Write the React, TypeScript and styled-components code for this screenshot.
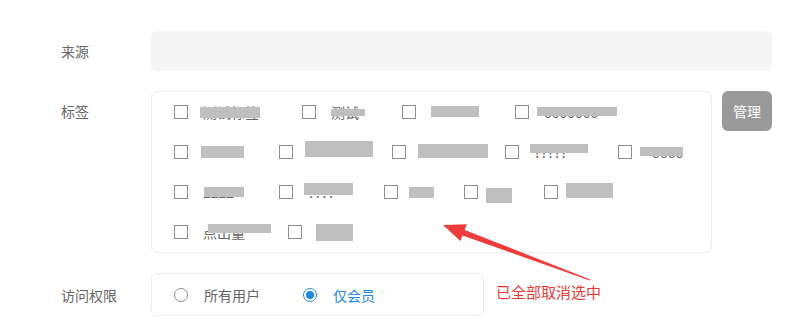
import React from 'react';
import styled, { createGlobalStyle } from 'styled-components';

const GlobalStyle = createGlobalStyle`
  body {
    margin: 0;
    background: #fff;
    font-family: "Noto Sans CJK SC", "Noto Sans", sans-serif;
  }
`;

const Page = styled.div`
  position: relative;
  width: 788px;
  height: 336px;
  padding: 31px 0 0 61px;
  box-sizing: border-box;
  overflow: hidden;
`;

const Row = styled.div`
  display: flex;
  align-items: ${({ $align }: { $align?: string }) => $align || 'center'};
  margin-bottom: 20px;
`;

const Label = styled.div`
  width: 90px;
  flex-shrink: 0;
  font-size: 14px;
  line-height: 40px;
  color: #666;
`;

const SourceInput = styled.div`
  width: 621px;
  height: 40px;
  border-radius: 6px;
  background: #f5f5f5;
`;

const TagBox = styled.div`
  width: 561px;
  height: 162px;
  box-sizing: border-box;
  border: 1px solid #ebebeb;
  border-radius: 6px;
  padding-left: 22px;
  display: flex;
  flex-direction: column;
`;

const TagRow = styled.div`
  display: flex;
  height: 40px;
  align-items: center;
`;

const TagItem = styled.label`
  display: flex;
  align-items: center;
  margin-right: 40px;
`;

const Checkbox = styled.span`
  width: 14px;
  height: 14px;
  box-sizing: border-box;
  border: 1px solid #8f8f8f;
  flex-shrink: 0;
`;

const TagText = styled.span<{ $w: number }>`
  position: relative;
  width: ${({ $w }) => $w}px;
  margin-left: 15px;
  height: 40px;
  line-height: 40px;
  font-size: 14px;
  color: #666;
  white-space: nowrap;
`;

const Redact = styled.span`
  position: absolute;
  background: #bfbfbf;
`;

const ManageButton = styled.button`
  margin-left: 10px;
  width: 50px;
  height: 40px;
  border: none;
  border-radius: 6px;
  background: #999;
  color: #fff;
  font-family: inherit;
  font-size: 14px;
  padding: 0;
`;

const AccessBox = styled.div`
  width: 333px;
  height: 43px;
  box-sizing: border-box;
  border: 1px solid #ebebeb;
  border-radius: 6px;
  padding-left: 22px;
  display: flex;
  align-items: center;
`;

const RadioItem = styled.label`
  display: flex;
  align-items: center;
  margin-right: 43px;
`;

const Radio = styled.span<{ $on?: boolean }>`
  width: 14px;
  height: 14px;
  box-sizing: border-box;
  border-radius: 50%;
  border: 1px solid ${({ $on }) => ($on ? '#1e88e5' : '#8f8f8f')};
  display: flex;
  align-items: center;
  justify-content: center;
  &::after {
    content: '';
    display: ${({ $on }) => ($on ? 'block' : 'none')};
    width: 8px;
    height: 8px;
    border-radius: 50%;
    background: #1e88e5;
  }
`;

const RadioText = styled.span<{ $on?: boolean }>`
  margin-left: 16px;
  font-size: 14px;
  color: ${({ $on }) => ($on ? '#1e88e5' : '#666')};
`;

const Note = styled.span`
  margin-left: 12px;
  margin-bottom: 6px;
  font-size: 15px;
  color: #e53935;
`;

const Arrow = styled.svg`
  position: absolute;
  left: 0;
  top: 0;
  pointer-events: none;
`;

type Tag = { text: string; w: number; mr?: number; bar: [number, number, number, number] };

// bar: [left, top, width, height] relative to the label box
const tagRows: Tag[][] = [
  [
    { text: '测试标签', w: 59, bar: [-3, 15, 60, 11] },
    { text: '测试', w: 31, bar: [0, 17, 34, 7] },
    { text: '……', w: 44, bar: [0, 14, 48, 11] },
    { text: '0000000', w: 80, bar: [-7, 15, 80, 9] },
  ],
  [
    { text: '', w: 36, bar: [-2, 14, 43, 12] },
    { text: '--------', w: 44, bar: [-3, 9, 68, 16] },
    { text: '', w: 44, bar: [-3, 12, 70, 14] },
    { text: '?????', w: 44, bar: [-4, 12, 58, 9] },
    { text: '-6666', w: 40, bar: [-7, 15, 43, 9] },
  ],
  [
    { text: '2222', w: 36, bar: [1, 15, 40, 10] },
    { text: '????', w: 36, bar: [-4, 11, 49, 12] },
    { text: '2', w: 11, mr: 40, bar: [-4, 15, 25, 11] },
    { text: '2', w: 11, bar: [-7, 16, 26, 15] },
    { text: '----', w: 40, bar: [-7, 11, 47, 15] },
  ],
  [
    { text: '点出量', w: 45, bar: [5, 12, 63, 9] },
    { text: '2(--)', w: 36, bar: [-1, 12, 37, 17] },
  ],
];

export default function App() {
  return (
    <Page>
      <GlobalStyle />
      <Row>
        <Label>来源</Label>
        <SourceInput />
      </Row>
      <Row $align="flex-start">
        <Label>标签</Label>
        <TagBox>
          {tagRows.map((row, i) => (
            <TagRow key={i}>
              {row.map((t, j) => (
                <TagItem key={j}>
                  <Checkbox />
                  <TagText $w={t.w}>
                    {t.text}
                    <Redact
                      style={{ left: t.bar[0], top: t.bar[1], width: t.bar[2], height: t.bar[3] }}
                    />
                  </TagText>
                </TagItem>
              ))}
            </TagRow>
          ))}
        </TagBox>
        <ManageButton>管理</ManageButton>
      </Row>
      <Row>
        <Label>访问权限</Label>
        <AccessBox>
          <RadioItem>
            <Radio />
            <RadioText>所有用户</RadioText>
          </RadioItem>
          <RadioItem>
            <Radio $on />
            <RadioText $on>仅会员</RadioText>
          </RadioItem>
        </AccessBox>
        <Note>已全部取消选中</Note>
      </Row>
      <Arrow width="788" height="336" viewBox="0 0 788 336">
        <polygon
          points="443,225 466.8,224.3 464.6,229.9 590.2,279.5 589.8,280.5 462.5,235.5 460.4,241.1"
          fill="#ee3b3b"
        />
      </Arrow>
    </Page>
  );
}
